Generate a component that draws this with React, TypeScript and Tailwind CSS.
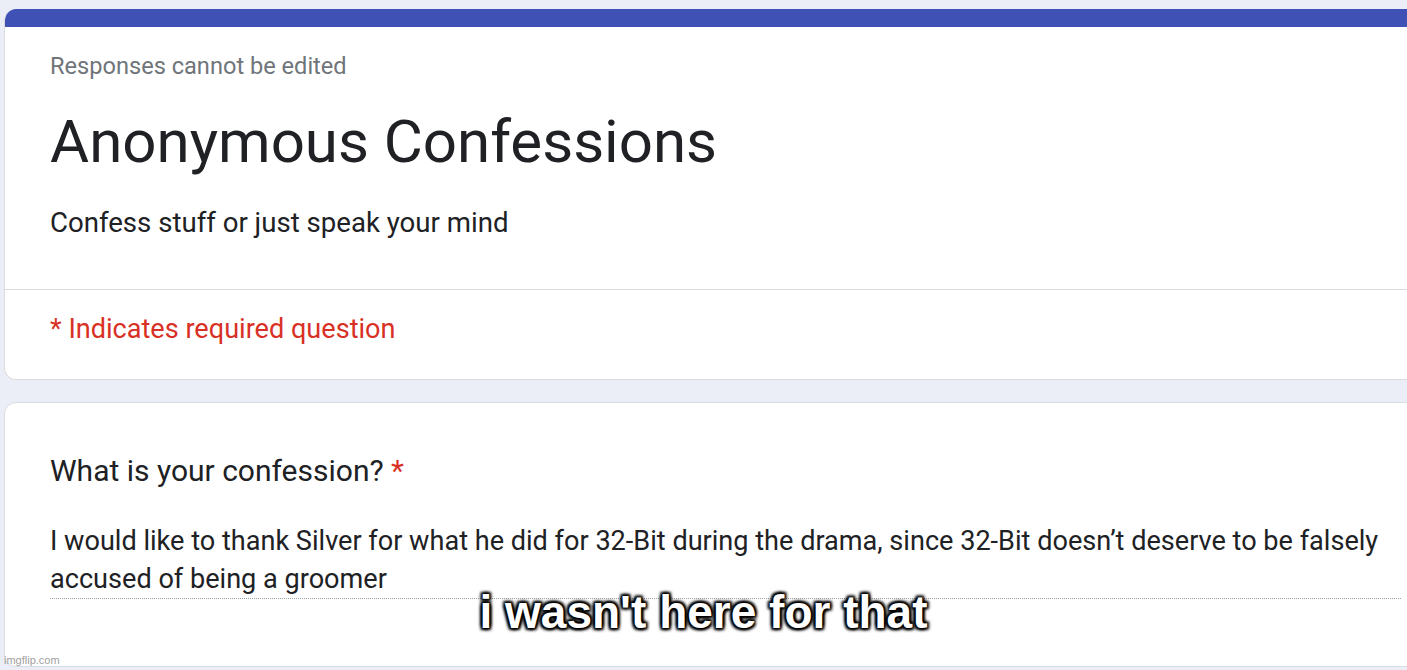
import React from "react";

export default function App() {
  return (
    <div className="relative w-[1407px] h-[670px] overflow-hidden bg-[#ebedf7] font-['Roboto','Noto_Sans',sans-serif]">
      <div className="pt-[9px] pl-[4px] flex flex-col gap-[22px] w-[1440px]">
        {/* Header card */}
        <div className="rounded-[12px] bg-white border border-[#dadce0] border-t-0 overflow-hidden">
          <div className="h-[18px] bg-[#3f51b5]" />
          <div className="px-[45px] pt-[25px] pb-[50px]">
            <div className="text-[23.6px] leading-[28px] text-[#70757a]">Responses cannot be edited</div>
            <div className="mt-[26px] text-[60px] leading-[72px] text-[#202124]">Anonymous Confessions</div>
            <div className="mt-[29px] text-[27.6px] leading-[32px] text-[#202124]">Confess stuff or just speak your mind</div>
          </div>
          <div className="border-t border-[#dadce0] px-[45px] pt-[23px] pb-[34px]">
            <div className="text-[27.1px] leading-[32px] text-[#d93025]">* Indicates required question</div>
          </div>
        </div>

        {/* Question card */}
        <div className="rounded-[12px] bg-white border border-[#dadce0] px-[45px] pt-[51px] pb-[67px]">
          <div className="text-[30px] leading-[34px] text-[#202124]">
            What is your confession? <span className="text-[#d93025]">*</span>
          </div>
          <div className="mt-[34px] w-[1351px] border-b border-dotted border-[#9aa0a6] text-[27.1px] leading-[38px] text-[#202124]">
            I would like to thank Silver for what he did for 32-Bit during the drama, since 32-Bit doesn’t deserve to be falsely accused of being a groomer
          </div>
        </div>
      </div>

      {/* Meme caption overlay */}
      <div className="absolute left-0 right-0 top-[586px] flex justify-center">
        <span className="font-['Liberation_Sans',Arial,sans-serif] font-bold text-[46px] leading-[52px] text-white [text-shadow:0_0_3px_#000,0_0_3px_#000,2px_2px_3px_#000,-2px_-2px_3px_#000,2px_-2px_3px_#000,-2px_2px_3px_#000]">
          i wasn't here for that
        </span>
      </div>

      {/* watermark */}
      <div className="absolute left-[4px] top-[654px] font-['Liberation_Sans',Arial,sans-serif] text-[11px] leading-[13px] text-[#a0a0a0]">
        imgflip.com
      </div>
    </div>
  );
}
